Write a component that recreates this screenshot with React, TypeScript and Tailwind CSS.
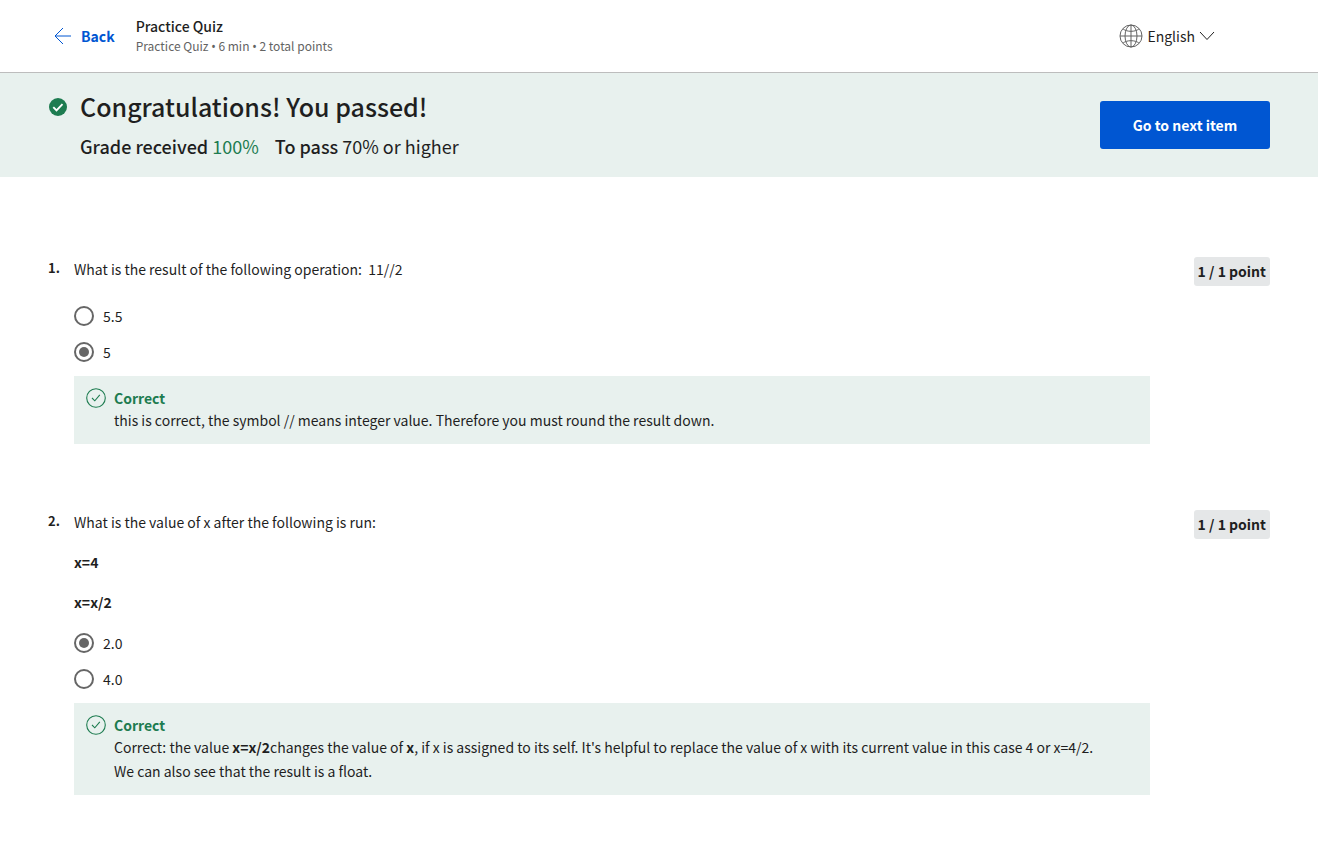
import type { ReactNode } from "react";

function BackArrow() {
  return (
    <svg width="18" height="18" viewBox="0 0 18 18" fill="none" stroke="#0056d2" strokeWidth="1" aria-hidden="true">
      <path d="M1 9h16M9 1L1 9l8 8" />
    </svg>
  );
}

function Globe() {
  return (
    <svg width="24" height="24" viewBox="0 0 24 24" fill="none" stroke="#636363" strokeWidth="1" aria-hidden="true">
      <circle cx="12" cy="12" r="11" />
      <path d="M12 1v22M1 12h22M4 4.800C6 6.600 8.800 7.300 12 7.300s6-.7 8-2.500M4 19.200c2-1.800 4.800-2.500 8-2.500s6 .7 8 2.500" />
      <ellipse cx="12" cy="12" rx="6" ry="11" />
    </svg>
  );
}

function PassedIcon() {
  return (
    <svg width="18" height="18" viewBox="0 0 18 18" fill="none" aria-hidden="true">
      <circle cx="9" cy="9" r="9" fill="#1d7c50" />
      <path d="M4.300 9.200l3.200 3.200 6-6.200" stroke="#fff" strokeWidth="1.900" />
    </svg>
  );
}

function CorrectIcon() {
  return (
    <svg className="shrink-0" width="20" height="20" viewBox="0 0 20 20" fill="none" stroke="#1d7c50" aria-hidden="true">
      <circle cx="10" cy="10" r="9.300" strokeWidth="1.100" />
      <path d="M6 10l2.800 2.800 5-6" strokeWidth="1.100" />
    </svg>
  );
}

function Bullet() {
  return <span className="font-['Noto_Sans',sans-serif]">•</span>;
}

type QuestionProps = {
  number: number;
  prompt: ReactNode;
  options: string[];
  answer: string;
  feedback: ReactNode;
};

function Question({ number, prompt, options, answer, feedback }: QuestionProps) {
  const name = `question-${number}`;
  return (
    <li className="flex items-start">
      <span className="w-[26px] shrink-0 text-[13px] leading-[22px] font-bold">{number}.</span>
      <div className="min-w-0 flex-1">
        <fieldset>
          <legend className="flex min-h-[30px] flex-col gap-4 leading-6">{prompt}</legend>
          <div className="flex flex-col pt-[11px]">
            {options.map((option) => (
              <label key={option} className="flex h-9 items-center gap-[9px]">
                <input
                  type="radio"
                  name={name}
                  value={option}
                  defaultChecked={option === answer}
                  className="size-5 appearance-none rounded-full border-2 border-[#666] bg-clip-content p-[3px] checked:bg-[#666]"
                />
                <span>{option}</span>
              </label>
            ))}
          </div>
        </fieldset>
        <div className="mt-1.5 flex gap-2 bg-[#e8f1ee] p-3">
          <CorrectIcon />
          <div>
            <h3 className="leading-5 font-bold text-[#1d7c50]">Correct</h3>
            <p className="leading-6">{feedback}</p>
          </div>
        </div>
      </div>
      <div className="flex w-[120px] shrink-0 justify-end">
        <span className="rounded-[3px] bg-[#e5e7e8] px-1 leading-[29px] font-bold">1 / 1 point</span>
      </div>
    </li>
  );
}

export default function App() {
  return (
    <div className="min-h-screen bg-white font-['Noto_Sans_CJK_SC',sans-serif] text-[14px] text-[#1f1f1f]">
      <header className="flex h-[73px] items-center justify-between border-b border-[#bdbdbd] pr-[103px] pl-[54px]">
        <div className="flex items-center gap-[21px]">
          <a href="#back" className="flex items-center gap-[9px] font-bold text-[#0056d2]">
            <BackArrow />
            Back
          </a>
          <div>
            <h1 className="leading-5 font-medium">Practice Quiz</h1>
            <p className="text-[12px] leading-5 text-[#636363]">
              Practice Quiz <Bullet /> 6 min <Bullet /> 2 total points
            </p>
          </div>
        </div>
        <button type="button" className="flex items-center gap-1">
          <Globe />
          English
          <svg width="16" height="10" viewBox="0 0 16 10" fill="none" stroke="#1f1f1f" aria-hidden="true">
            <path d="M1 1l7 7.500L15 1" />
          </svg>
        </button>
      </header>

      <section className="flex items-center justify-between bg-[#e8f1ee] py-4 pr-12 pl-[49px]">
        <div className="flex gap-[13px]">
          <div className="flex h-9 items-center">
            <PassedIcon />
          </div>
          <div className="min-h-[72px]">
            <h2 className="text-[25px] leading-[34px] font-medium">Congratulations! You passed!</h2>
            <p className="mt-[9px] flex gap-4 text-[18px] leading-7">
              <span>
                <span className="font-medium">Grade received</span> <span className="text-[#1d7c50]">100%</span>
              </span>
              <span>
                <span className="font-medium">To pass</span> 70% or higher
              </span>
            </p>
          </div>
        </div>
        <button type="button" className="h-12 w-[170px] rounded-[3px] bg-[#0056d2] font-bold text-white">
          Go to next item
        </button>
      </section>

      <main className="px-12 pt-20 pb-16">
        <ol className="flex flex-col gap-[66px]">
          <Question
            number={1}
            prompt={<p>What is the result of the following operation: &nbsp;11//2</p>}
            options={["5.5", "5"]}
            answer="5"
            feedback="this is correct, the symbol // means integer value. Therefore you must round the result down."
          />
          <Question
            number={2}
            prompt={
              <>
                <p>What is the value of x after the following is run:</p>
                <p className="font-bold">x=4</p>
                <p className="font-bold">x=x/2</p>
              </>
            }
            options={["2.0", "4.0"]}
            answer="2.0"
            feedback={
              <>
                Correct: the value <b>x=x/2</b>changes the value of <b>x</b>, if x is assigned to its self. It's helpful
                to replace the value of x with its current value in this case 4 or x=4/2.
                <br />
                We can also see that the result is a float.
              </>
            }
          />
        </ol>
      </main>
    </div>
  );
}
